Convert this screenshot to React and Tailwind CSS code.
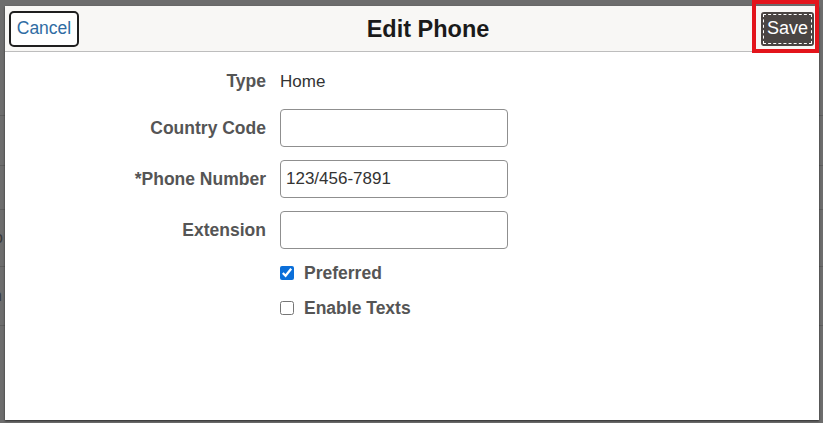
import React from "react";

export default function App() {
  const font = { fontFamily: '"Liberation Sans", Arial, sans-serif' };
  return (
    <div className="relative w-[823px] h-[423px] overflow-hidden bg-[#6d6d6d]" style={font}>
      {/* dimmed page behind */}
      <div className="flex flex-col text-[#3a3a3a] text-[16px]">
        <div className="h-[116px] border-b border-[#5e5e5e]"></div>
        <div className="h-[50px] border-b border-[#5e5e5e]"></div>
        <div className="h-[44px] border-b border-[#5e5e5e]"></div>
        <div className="h-[57px] border-b border-[#5e5e5e] flex items-center">
          <span className="-ml-[6px]">o</span>
        </div>
        <div className="h-[59px] border-b border-[#5e5e5e] flex items-center">
          <span className="-ml-[7px]">n</span>
        </div>
      </div>

      {/* modal */}
      <div className="absolute left-[5px] top-[6px] w-[814px] h-[414px] bg-white flex flex-col shadow-[0_1px_2px_rgba(0,0,0,0.6)]">
        <div className="h-[46px] bg-[#f8f7f5] border-b border-[#bdbdbd] flex items-center justify-between pl-[4px] pr-[5px]">
          <button className="h-[36px] w-[70px] border-2 border-[#1f1f1f] rounded-[5px] text-[#2f6ca3] text-[17.5px] flex items-center justify-center bg-white">
            Cancel
          </button>
          <div className="text-[23.5px] font-bold text-[#1a1a1a] ml-[16px] mt-[3px]">Edit Phone</div>
          <button className="h-[34px] w-[53px] rounded-[3px] bg-[#4a4543] text-white text-[18px] flex items-center justify-center outline outline-1 outline-dashed outline-white -outline-offset-[3px]">
            Save
          </button>
        </div>
        <div className="flex flex-col pt-[17px] text-[17.5px]">
          <div className="flex items-center h-[25px]">
            <div className="w-[261px] text-right font-bold text-[#555555]">Type</div>
            <div className="ml-[14px] text-[#333333] text-[17px]">Home</div>
          </div>
          <div className="flex items-center mt-[15px] h-[38px]">
            <div className="w-[261px] text-right font-bold text-[#555555]">Country Code</div>
            <input className="ml-[14px] w-[228px] h-[38px] border border-[#8f8f8f] rounded-[4px] px-[5px] text-[17px] text-[#333]" />
          </div>
          <div className="flex items-center mt-[13px] h-[38px]">
            <div className="w-[261px] text-right font-bold text-[#555555]">*Phone Number</div>
            <input
              defaultValue="123/456-7891"
              className="ml-[14px] w-[228px] h-[38px] border border-[#8f8f8f] rounded-[4px] px-[5px] text-[17px] text-[#333]"
              style={font}
            />
          </div>
          <div className="flex items-center mt-[13px] h-[38px]">
            <div className="w-[261px] text-right font-bold text-[#555555]">Extension</div>
            <input className="ml-[14px] w-[228px] h-[38px] border border-[#8f8f8f] rounded-[4px] px-[5px] text-[17px] text-[#333]" />
          </div>
          <div className="flex items-center mt-[13px] h-[22px] ml-[275px]">
            <input type="checkbox" defaultChecked className="w-[14px] h-[14px] m-0 accent-[#0b6fd9]" />
            <span className="ml-[10px] font-bold text-[#555555]">Preferred</span>
          </div>
          <div className="flex items-center mt-[13px] h-[22px] ml-[275px]">
            <input type="checkbox" className="w-[14px] h-[14px] m-0" />
            <span className="ml-[10px] font-bold text-[#555555]">Enable Texts</span>
          </div>
        </div>
      </div>

      {/* highlight box */}
      <div className="absolute left-[752px] top-0 w-[67px] h-[53px] border-[4px] border-[#e3141b]"></div>
    </div>
  );
}
